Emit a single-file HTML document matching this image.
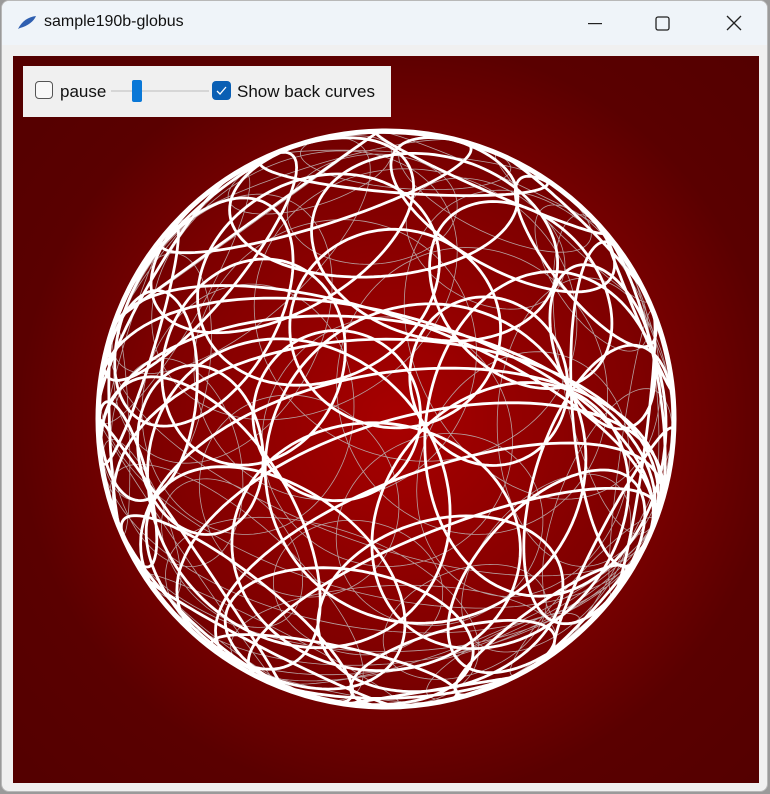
<!DOCTYPE html>
<html><head><meta charset="utf-8"><style>
body{margin:0;width:770px;height:794px;background:#9a9a9a;overflow:hidden;font-family:"Liberation Sans",sans-serif}
.win{position:absolute;left:1px;top:0;width:767px;height:792px;background:#f0f0f0;border-radius:8px;overflow:hidden;border:1px solid #b8b8b8;box-sizing:border-box}
.title{height:44px;background:#eff4f9;position:relative}
.title span{position:absolute;left:42px;top:12px;font-size:16px;color:#111}
.canvas{position:absolute;left:11px;top:55px;width:746px;height:727px;background:radial-gradient(circle at 385px 365px,#a80000 0,#7d0000 250px,#5a0000 380px,#500000 600px)}
.panel{position:absolute;left:10px;top:10px;width:368px;height:51px;background:#f0f0f0}
.panel .t{position:absolute;font-size:17px;color:#111;top:16px}
</style></head><body>
<div class="win">
<div class="title">
<svg style="position:absolute;left:14px;top:14px" width="22" height="16"><path d="M2 14 C6 6 12 2 20 1 C18 6 12 11 4 13Z" fill="#2f5fb0"/></svg>
<span>sample190b-globus</span>
<svg style="position:absolute;left:586px;top:22px" width="14" height="2"><rect width="14" height="1.2" fill="#222"/></svg>
<svg style="position:absolute;left:653px;top:15px" width="15" height="15"><rect x="1" y="1" width="13" height="13" rx="2" fill="none" stroke="#222" stroke-width="1.3"/></svg>
<svg style="position:absolute;left:724px;top:14px" width="16" height="16"><path d="M1 1L15 15M15 1L1 15" stroke="#222" stroke-width="1.3"/></svg>
</div>
<div class="canvas">
<svg id="g" width="746" height="727" style="position:absolute;left:0;top:0"></svg>
<div class="panel">
<div style="position:absolute;left:12px;top:15px;width:18px;height:18px;border:1px solid #555;border-radius:4px;box-sizing:border-box;background:#f8f8f8"></div>
<div class="t" style="left:37px">pause</div>
<div style="position:absolute;left:88px;top:24px;width:98px;height:2px;background:#d6d6d6"></div>
<div style="position:absolute;left:109px;top:14px;width:10px;height:22px;background:#0a78d7;border-radius:2px"></div>
<div style="position:absolute;left:189px;top:15px;width:19px;height:19px;background:#0a5fb4;border-radius:4px"><svg width="19" height="19"><path d="M5 10l3 3 6-7" fill="none" stroke="#fff" stroke-width="1.3"/></svg></div>
<div class="t" style="left:214px">Show back curves</div>
</div>
</div>
</div>
<script>
var svg=document.getElementById('g'),cx=373,cy=363,R=288,NS='http://www.w3.org/2000/svg';
var front='',back='';
function norm(v){var l=Math.hypot(v[0],v[1],v[2]);return[v[0]/l,v[1]/l,v[2]/l];}
function cross(a,b){return[a[1]*b[2]-a[2]*b[1],a[2]*b[0]-a[0]*b[2],a[0]*b[1]-a[1]*b[0]];}
function circ(c,r){c=norm(c);var u=norm(cross(c,Math.abs(c[0])<0.9?[1,0,0]:[0,1,0]));var w=cross(c,u);
var cr=Math.cos(r),sr=Math.sin(r),pf=0,pb=0;
for(var i=0;i<=120;i++){var t=i/120*2*Math.PI,ct=Math.cos(t),st=Math.sin(t);
var p=[c[0]*cr+sr*(u[0]*ct+w[0]*st),c[1]*cr+sr*(u[1]*ct+w[1]*st),c[2]*cr+sr*(u[2]*ct+w[2]*st)];
var X=(cx+p[0]*R).toFixed(1),Y=(cy+p[1]*R).toFixed(1);
if(p[2]>=0){front+=(pf?'L':'M')+X+' '+Y;pf=1;pb=0;}else{back+=(pb?'L':'M')+X+' '+Y;pb=1;pf=0;}}}
var N=80,g=Math.PI*(3-Math.sqrt(5));
for(var i=0;i<N;i++){var y=1-2*(i+0.5)/N,rr=Math.sqrt(1-y*y),th=g*i;
circ([rr*Math.cos(th),y,rr*Math.sin(th)],0.3+0.3*((i*7)%5)/4);}
for(var k=0;k<8;k++){var a=k*Math.PI/8;circ([Math.cos(a)*0.4,1,Math.sin(a)*0.4+0.3],Math.PI/2*(0.55+0.06*k));}
function mk(d,c,w){var p=document.createElementNS(NS,'path');p.setAttribute('d',d);p.setAttribute('fill','none');p.setAttribute('stroke',c);p.setAttribute('stroke-width',w);svg.appendChild(p);}
mk(back,'#b8a0a0',0.8);mk(front,'#fff',2.8);
var c=document.createElementNS(NS,'circle');c.setAttribute('cx',cx);c.setAttribute('cy',cy);c.setAttribute('r',R);c.setAttribute('fill','none');c.setAttribute('stroke','#fff');c.setAttribute('stroke-width',5);svg.appendChild(c);
</script>
</body></html>
